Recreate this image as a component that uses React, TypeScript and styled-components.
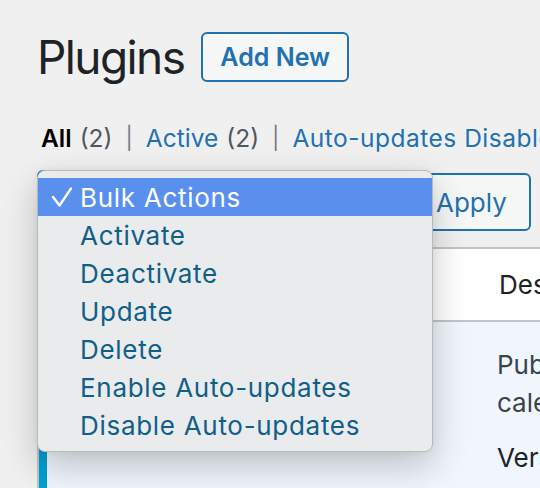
import React from "react"
import styled, { createGlobalStyle } from "styled-components"

const GlobalStyle = createGlobalStyle`
  body {
    margin: 0;
    background: #f0f0f1;
    font-family: Inter, "Open Sans", "DejaVu Sans", sans-serif;
  }
`

const actions = [
  "Bulk Actions",
  "Activate",
  "Deactivate",
  "Update",
  "Delete",
  "Enable Auto-updates",
  "Disable Auto-updates",
]

export default function App() {
  return (
    <>
      <GlobalStyle />
      <Page>
        <Header>
          <Title>Plugins</Title>
          <OutlineButton>Add New</OutlineButton>
        </Header>

        <Filters>
          <Current>All</Current>
          <Count>(2)</Count>
          <Sep>|</Sep>
          <FilterLink>Active</FilterLink>
          <Count>(2)</Count>
          <Sep>|</Sep>
          <FilterLink wide>Auto-updates Disabled</FilterLink>
          <Count>(2)</Count>
        </Filters>

        <TableNav>
          <Select>Bulk Actions</Select>
          <ApplyButton>Apply</ApplyButton>
        </TableNav>

        <Table>
          <HeadRow>
            <Cell />
            <HeadCell>Description</HeadCell>
          </HeadRow>
          <PluginRow active>
            <Cell />
            <DescCell>
              <Line>Publish your site</Line>
              <Line>calendar</Line>
              <Meta>Version 1.0</Meta>
            </DescCell>
          </PluginRow>
        </Table>

        <Menu>
          {actions.map((a, i) => (
            <MenuItem key={a} selected={i === 0}>
              <Check>
                {i === 0 && (
                  <svg width="22" height="22" viewBox="0 0 22 22">
                    <polyline
                      points="2,11 8.5,19.5 20,2.5"
                      fill="none"
                      stroke="#fff"
                      strokeWidth="2.4"
                      strokeLinecap="round"
                      strokeLinejoin="round"
                    />
                  </svg>
                )}
              </Check>
              {a}
            </MenuItem>
          ))}
        </Menu>
      </Page>
    </>
  )
}

const Page = styled.div`
  position: relative;
  width: 540px;
  height: 488px;
  overflow: hidden;
  padding-left: 37px;
  box-sizing: border-box;
`
const Header = styled.div`
  display: flex;
  align-items: center;
  gap: 17px;
  padding-top: 32px;
`
const Title = styled.h1`
  margin: 0;
  font-size: 46px;
  font-weight: 400;
  line-height: 50px;
  color: #1d2327;
  letter-spacing: -1.6px;
`
const OutlineButton = styled.button`
  height: 50px;
  padding: 0 17px;
  border: 2px solid #2271b1;
  border-radius: 6px;
  background: #f6f7f7;
  color: #2271b1;
  font-family: inherit;
  font-size: 25px;
  font-weight: 600;
`
const Filters = styled.div`
  display: flex;
  white-space: nowrap;
  margin-top: 38px;
  padding-left: 4px;
  font-size: 24.5px;
  line-height: 36px;
  color: #50575e;
`
const Current = styled.span`
  color: #000;
  font-weight: 600;
`
const Count = styled.span`
  margin-left: 8px;
`
const Sep = styled.span`
  margin: 0 13px;
  color: #787c82;
  font-size: 22px;
`
const FilterLink = styled.span<{ wide?: boolean }>`
  color: #2271b1;
  letter-spacing: ${p => (p.wide ? "0.5px" : "0")};
`
const TableNav = styled.div`
  display: flex;
  gap: 8px;
  margin-top: 14px;
`
const Select = styled.div`
  width: 369px;
  height: 60px;
  box-sizing: border-box;
  border: 2px solid #2271b1;
  border-radius: 6px;
  background: #fff;
  padding-left: 16px;
  font-size: 26px;
  line-height: 56px;
  color: #2c3338;
`
const ApplyButton = styled.button`
  height: 58px;
  margin-top: 3px;
  padding: 0 22px 0 20px;
  border: 2px solid #2271b1;
  border-radius: 6px;
  background: #f6f7f7;
  color: #2271b1;
  font-family: inherit;
  font-size: 26px;
`
const Table = styled.div`
  margin-top: 16px;
  width: 600px;
  border-left: 2px solid #c3c4c7;
  border-top: 2px solid #c3c4c7;
  background: #fff;
`
const HeadRow = styled.div`
  display: grid;
  grid-template-columns: 440px 1fr;
  height: 71px;
  border-bottom: 2px solid #c3c4c7;
  align-items: center;
`
const Cell = styled.div``
const HeadCell = styled.div`
  padding-left: 20px;
  font-size: 26px;
  color: #1d2327;
`
const PluginRow = styled.div<{ active?: boolean }>`
  display: grid;
  grid-template-columns: 432px 1fr;
  min-height: 200px;
  background: ${p => (p.active ? "#f0f6fc" : "#fff")};
  border-left: 8px solid ${p => (p.active ? "#00a0d2" : "transparent")};
`
const DescCell = styled.div`
  padding: 24px 0 0 18px;
  font-size: 26px;
  line-height: 38px;
  color: #3c434a;
  white-space: nowrap;
`
const Line = styled.div``
const Meta = styled.div`
  margin-top: 17px;
  color: #1d2327;
`
const Menu = styled.div`
  position: absolute;
  left: 37px;
  top: 170px;
  width: 396px;
  box-sizing: border-box;
  padding: 7px 0;
  background: #eaebed;
  border: 1px solid #b8b9bb;
  border-radius: 8px;
  box-shadow: 0 14px 36px rgba(0, 0, 0, 0.22), 0 0 6px rgba(0, 0, 0, 0.06);
`
const MenuItem = styled.div<{ selected?: boolean }>`
  display: flex;
  align-items: center;
  height: 38px;
  padding-left: 13px;
  font-size: 26px;
  letter-spacing: 0.7px;
  color: ${p => (p.selected ? "#fff" : "#0f5f88")};
  background: ${p => (p.selected ? "#5990ee" : "transparent")};
  white-space: nowrap;
`
const Check = styled.span`
  display: inline-flex;
  align-items: center;
  width: 29px;
  height: 22px;
`
